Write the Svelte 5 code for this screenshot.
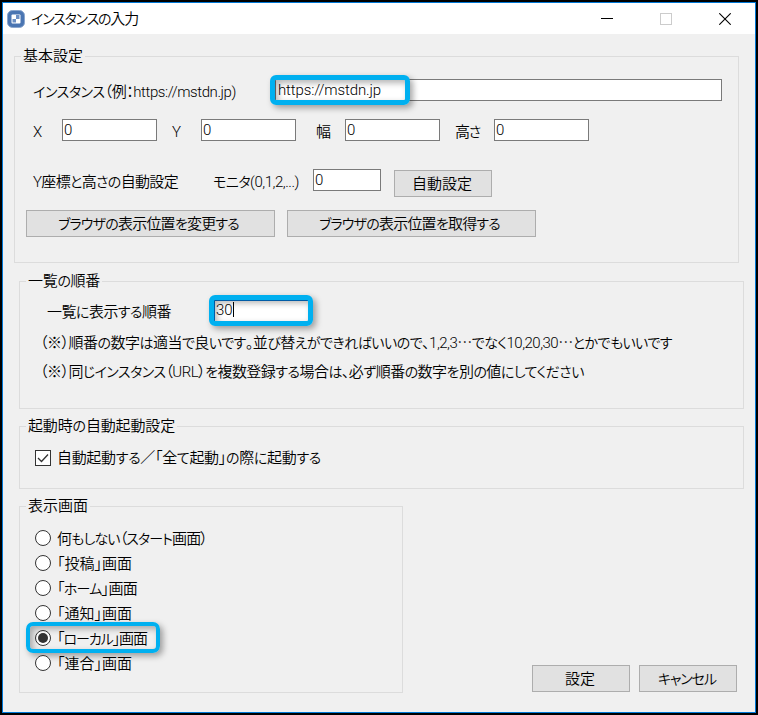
<script>
    let url = $state('https://mstdn.jp');
    let order = $state('30');
    let autoStart = $state(true);
    let screen = $state('local');

    const bounds = [
        { label: 'X', value: '0', width: 9 },
        { label: 'Y', value: '0', width: 9 },
        { label: '幅', value: '0', width: 15 },
        { label: '高さ', value: '0', width: 25 }
    ];

    const screens = [
        { id: 'none', label: '何もしない（スタート画面）', width: 150 },
        { id: 'post', label: '「投稿」画面', width: 75 },
        { id: 'home', label: '「ホーム」画面', width: 80 },
        { id: 'notice', label: '「通知」画面', width: 75 },
        { id: 'local', label: '「ローカル」画面', width: 90 },
        { id: 'federated', label: '「連合」画面', width: 75 }
    ];

    // Spread or tighten the letters so the label takes the given width
    function fit(node, width) {
        const count = [...node.textContent].length;
        const natural = node.getBoundingClientRect().width;
        node.style.letterSpacing = `${(width - natural) / count}px`;
    }

    // Kana are set a little smaller than kanji, the ellipsis sits mid-line
    function runs(text) {
        return text.split(/([ぁ-んァ-ヶー]+|…)/).filter(Boolean).map((part) => ({
            part,
            kana: /^[ぁ-んァ-ヶー]/.test(part),
            dots: part === '…'
        }));
    }
</script>

{#snippet txt(text, width)}
    <span class="txt" use:fit={width}>{#each runs(text) as run}<span class:kana={run.kana} class:dots={run.dots}>{run.part}</span>{/each}</span>
{/snippet}

<div class="window">
    <header class="titlebar">
        <svg class="app-icon" width="18" height="18" viewBox="0 0 18 18">
            <rect x="0.5" y="0.5" width="17" height="17" rx="5" fill="#4a75b2" stroke="#8ba6cd" />
            <rect x="4.5" y="4.5" width="9" height="9" rx="1" fill="#fff" />
            <path d="M9 5h3.5v4H9zM5.500 9H9v3.500H5.500z" fill="#6c8fc3" />
        </svg>
        <span class="title">{@render txt('インスタンスの入力', 107)}</span>
        <div class="controls">
            <svg width="12" height="12" viewBox="0 0 12 12"><path d="M0 5.5h12" stroke="#000" /></svg>
            <svg width="12" height="12" viewBox="0 0 12 12"><rect x="0.5" y="0.5" width="11" height="11" fill="none" stroke="#ccc" /></svg>
            <svg width="12" height="12" viewBox="0 0 12 12"><path d="M0.300 0.300l11.400 11.400M11.700 0.300L0.300 11.700" stroke="#000" stroke-width="1.100" /></svg>
        </div>
    </header>

    <main>
        <fieldset class="basic">
            <legend>{@render txt('基本設定', 60)}</legend>
            <div class="row url-row">
                <span class="label">{@render txt('インスタンス（例：https://mstdn.jp)', 203)}</span>
                <div class="field url">
                    {@render txt(url, 103)}
                    <i class="mark mark-url"></i>
                </div>
            </div>
            <div class="row bounds">
                {#each bounds as item}
                    <span class="label">{@render txt(item.label, item.width)}</span>
                    <div class="field">{item.value}</div>
                {/each}
            </div>
            <div class="row auto-row">
                <span class="label auto">{@render txt('Y座標と高さの自動設定', 145)}</span>
                <span class="label monitor">{@render txt('モニタ(0,1,2,...)', 86)}</span>
                <div class="field">0</div>
                <button>{@render txt('自動設定', 60)}</button>
            </div>
            <div class="row browser-row">
                <button>{@render txt('ブラウザの表示位置を変更する', 181)}</button>
                <button>{@render txt('ブラウザの表示位置を取得する', 181)}</button>
            </div>
        </fieldset>

        <fieldset class="order">
            <legend>{@render txt('一覧の順番', 72)}</legend>
            <div class="row">
                <span class="label">{@render txt('一覧に表示する順番', 124)}</span>
                <div class="field focused">
                    {order}<i class="caret"></i>
                    <i class="mark mark-order"></i>
                </div>
            </div>
            <p>{@render txt('（※）順番の数字は適当で良いです。並び替えができればいいので、1,2,3…でなく10,20,30…とかでもいいです', 632)}</p>
            <p>{@render txt('（※）同じインスタンス（URL）を複数登録する場合は、必ず順番の数字を別の値にしてください', 544)}</p>
        </fieldset>

        <fieldset class="startup">
            <legend>{@render txt('起動時の自動起動設定', 147)}</legend>
            <label class="choice">
                <input type="checkbox" bind:checked={autoStart} />
                <svg width="16" height="16" viewBox="0 0 16 16">
                    <rect x="0.5" y="0.5" width="15" height="15" fill="#fff" stroke="#333" />
                    {#if autoStart}
                        <path d="M3 8l3.500 3.500L13 4.500" fill="none" stroke="#333" stroke-width="1.300" />
                    {/if}
                </svg>
                {@render txt('自動起動する／「全て起動」の際に起動する', 264)}
            </label>
        </fieldset>

        <div class="bottom">
            <fieldset class="screens">
                <legend>{@render txt('表示画面', 60)}</legend>
                {#each screens as item}
                    <label class="choice">
                        <input type="radio" name="screen" value={item.id} bind:group={screen} />
                        <svg width="16" height="16" viewBox="0 0 16 16">
                            <circle cx="8" cy="8" r="7.500" fill="#fff" stroke="#333" />
                            {#if screen === item.id}
                                <circle cx="8" cy="8" r="5" fill="#333" />
                            {/if}
                        </svg>
                        {@render txt(item.label, item.width)}
                        {#if item.id === 'local'}
                            <i class="mark mark-screen"></i>
                        {/if}
                    </label>
                {/each}
            </fieldset>
            <div class="actions">
                <button>{@render txt('設定', 30)}</button>
                <button>{@render txt('キャンセル', 58)}</button>
            </div>
        </div>
    </main>
</div>

<style>
    :global(body) {
        background: #000;
    }

    .window {
        box-sizing: border-box;
        width: 758px;
        height: 715px;
        border: 2px solid #000;
        box-shadow: inset 0 0 0 1px #0078d7;
        padding: 1px;
        background: #f0f0f0;
        color: #000;
        font: 350 15px/20px Roboto, "Noto Sans CJK JP", sans-serif;
        font-feature-settings: "palt";
        overflow: hidden;
    }

    .titlebar {
        display: flex;
        align-items: center;
        height: 31px;
        padding-left: 4px;
        background: #fff;
    }

    .title {
        margin-left: 6px;
    }

    .txt {
        display: inline-block;
        white-space: nowrap;
    }

    .kana {
        font-size: 14px;
    }

    .dots {
        font-family: "Noto Sans CJK JP", sans-serif;
    }

    .controls {
        display: flex;
        gap: 47px;
        margin-left: auto;
        padding-right: 24px;
    }

    main {
        padding: 14px 11px 0;
    }

    fieldset {
        box-sizing: border-box;
        min-width: 0;
        margin: 0 0 0 5px;
        padding: 0;
        border: 1px solid #dcdcdc;
    }

    legend {
        height: 17px;
        margin-left: 6px;
        padding: 0 2px;
        line-height: 17px;
    }

    .basic {
        width: 725px;
        height: 215px;
        margin-left: 0;
    }

    .row {
        display: flex;
    }

    .label {
        box-sizing: border-box;
        flex: none;
        height: 22px;
        padding-top: 3px;
    }

    .field {
        position: relative;
        box-sizing: border-box;
        display: flex;
        flex: none;
        width: 95px;
        height: 22px;
        padding-left: 1px;
        border: 1px solid #7a7a7a;
        background: #fff;
    }

    .url-row {
        margin: 14px 0 0 18px;
    }

    .url-row .label {
        width: 242px;
    }

    .url {
        width: 447px;
        padding-left: 2px;
    }

    .bounds {
        margin: 18px 0 0 18px;
    }

    .bounds .label {
        width: 29px;
    }

    .bounds .field + .label {
        width: 44px;
        padding-left: 15px;
    }

    .bounds .field:nth-child(4) + .label {
        width: 49px;
        padding-left: 20px;
    }

    .bounds .field:nth-child(6) + .label {
        width: 54px;
    }

    .auto-row {
        margin: 28px 0 0 18px;
    }

    .auto {
        width: 180px;
    }

    .monitor {
        width: 100px;
    }

    .auto-row .field {
        width: 68px;
    }

    .auto-row button {
        margin: 1px 0 0 13px;
    }

    button {
        box-sizing: border-box;
        width: 98px;
        height: 27px;
        padding: 0 2px 0 0;
        border: 1px solid #adadad;
        background: #e1e1e1;
        color: inherit;
        font: inherit;
        font-feature-settings: inherit;
    }

    .browser-row {
        gap: 12px;
        margin: 13px 0 0 11px;
    }

    .browser-row button {
        width: 249px;
        padding-right: 4px;
    }

    .order {
        width: 725px;
        height: 136px;
        margin-top: 10px;
    }

    .order .row {
        margin: 10px 0 0 27px;
    }

    .order .label {
        width: 167px;
        padding-top: 2px;
    }

    .order .field {
        line-height: 19px;
    }

    .focused {
        border-color: #0078d7;
    }

    .caret {
        width: 1px;
        height: 15px;
        margin-top: 1px;
        background: #000;
    }

    .order p {
        height: 20px;
        margin: 10px 0 0 20px;
    }

    .startup {
        width: 725px;
        height: 71px;
        margin-top: 9px;
    }

    .choice {
        position: relative;
        display: flex;
        align-items: center;
        width: max-content;
        height: 25px;
        margin-left: 15px;
    }

    .choice input {
        position: absolute;
        opacity: 0;
    }

    .choice .txt {
        margin-left: 6px;
    }

    .screens .choice .txt {
        padding-top: 2px;
    }

    .startup .choice {
        margin-top: 10px;
    }

    .bottom {
        display: flex;
        margin-top: 9px;
    }

    .screens {
        width: 384px;
        height: 195px;
        padding-top: 10px;
    }

    .actions {
        display: flex;
        align-items: flex-end;
        gap: 9px;
        height: 194px;
        margin-left: 129px;
    }

    /* blue frames over the controls that have to be changed */
    .mark {
        position: absolute;
        box-sizing: border-box;
        border: 5px solid #00b0f0;
        border-radius: 6px;
        box-shadow: 3px 3px 6px rgba(0, 0, 0, 0.35), inset 3px 3px 6px rgba(0, 0, 0, 0.3);
        pointer-events: none;
    }

    .mark-url {
        top: -5px;
        left: -6px;
        width: 140px;
        height: 30px;
    }

    .mark-order {
        top: -6px;
        left: -6px;
        width: 104px;
        height: 31px;
    }

    .mark-screen {
        top: -3px;
        left: -9px;
        width: 134px;
        height: 31px;
        border-width: 4px;
        border-radius: 7px;
    }
</style>
